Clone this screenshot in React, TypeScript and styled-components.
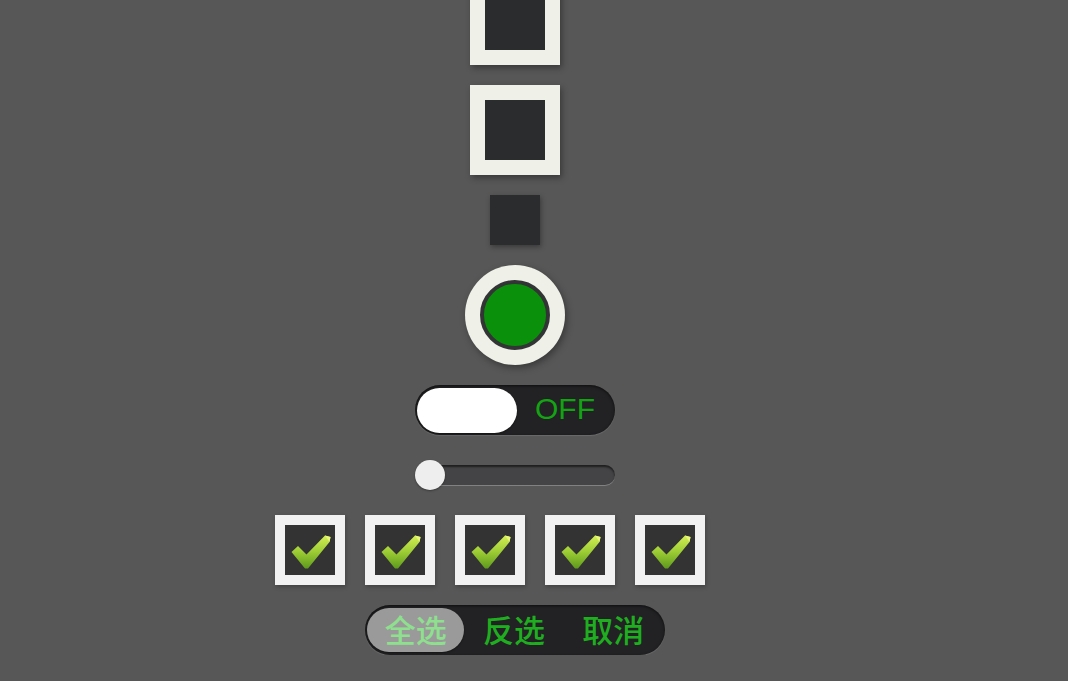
import React from "react";
import styled, { createGlobalStyle } from "styled-components";

const Global = createGlobalStyle`
  html, body { margin: 0; padding: 0; background: #575757; overflow: hidden; }
  body { font-family: "Liberation Sans", Arial, "Noto Sans CJK SC", sans-serif; }
`;

const Column = styled.div`
  width: 1030px;
  display: flex;
  flex-direction: column;
  align-items: center;
  margin-top: -25px;
`;

const FrameBox = styled.div<{ $gap?: number }>`
  width: 90px;
  height: 90px;
  box-sizing: border-box;
  border: 15px solid #eff1e8;
  background: #2b2c2e;
  box-shadow: 2px 3px 6px rgba(0, 0, 0, 0.35);
  margin-top: ${(p) => p.$gap ?? 0}px;
`;

const Square = styled.div`
  width: 50px;
  height: 50px;
  margin-top: 20px;
  background: #2b2c2e;
  box-shadow: 1px 2px 5px rgba(0, 0, 0, 0.35);
`;

const Radio = styled.div`
  width: 100px;
  height: 100px;
  margin-top: 20px;
  box-sizing: border-box;
  border-radius: 50%;
  background: #eff0e8;
  padding: 15px;
  box-shadow: 2px 3px 7px rgba(0, 0, 0, 0.35);
`;

const RadioDot = styled.div`
  width: 100%;
  height: 100%;
  box-sizing: border-box;
  border-radius: 50%;
  border: 4px solid #333435;
  background: #0b900b;
`;

const Toggle = styled.div`
  width: 200px;
  height: 50px;
  margin-top: 20px;
  box-sizing: border-box;
  border-radius: 25px;
  background: #222224;
  padding: 2px;
  display: flex;
  align-items: center;
  box-shadow: inset 0 1px 3px rgba(0, 0, 0, 0.6), 0 1px 1px rgba(255, 255, 255, 0.12);
`;

const Knob = styled.div`
  width: 100px;
  height: 45px;
  border-radius: 23px;
  background: #ffffff;
  box-shadow: 0 1px 2px rgba(0, 0, 0, 0.4);
`;

const ToggleLabel = styled.span`
  flex: 1;
  text-align: center;
  color: #13a313;
  font-size: 30px;
  font-family: "Liberation Sans", Arial, sans-serif;
  line-height: 1;
  margin-top: -2px;
`;

const Slider = styled.div`
  position: relative;
  width: 200px;
  height: 30px;
  margin-top: 25px;
  display: flex;
  align-items: center;
`;

const Track = styled.div`
  flex: 1;
  height: 20px;
  margin-left: 14px;
  border-radius: 10px;
  background: #444446;
  box-shadow: inset 0 2px 2px rgba(0, 0, 0, 0.55), 0 1px 0 rgba(255, 255, 255, 0.25);
`;

const Thumb = styled.div`
  position: absolute;
  left: 0;
  top: 0;
  width: 30px;
  height: 30px;
  border-radius: 50%;
  background: #eeeeee;
  box-shadow: 0 1px 2px rgba(0, 0, 0, 0.35);
`;

const CheckRow = styled.div`
  display: flex;
  gap: 20px;
  margin-top: 25px;
  margin-right: 50px;
`;

const CheckBox = styled.div`
  width: 70px;
  height: 70px;
  box-sizing: border-box;
  border: 10px solid #f1f1f1;
  background: #333333;
  display: flex;
  align-items: center;
  justify-content: center;
  box-shadow: 1px 2px 4px rgba(0, 0, 0, 0.25);
`;

const Segmented = styled.div`
  width: 300px;
  height: 50px;
  margin-top: 20px;
  box-sizing: border-box;
  border-radius: 25px;
  background: #222224;
  padding: 2px;
  display: flex;
  align-items: center;
  box-shadow: inset 0 1px 3px rgba(0, 0, 0, 0.6), 0 1px 1px rgba(255, 255, 255, 0.12);
`;

const Segment = styled.div<{ $active?: boolean }>`
  width: ${(p) => (p.$active ? 98 : 100)}px;
  height: 44px;
  border-radius: 22px;
  display: flex;
  align-items: center;
  justify-content: center;
  padding-bottom: 3px;
  box-sizing: border-box;
  font-family: "Noto Sans CJK SC", "Liberation Sans", sans-serif;
  font-size: 31px;
  font-weight: 500;
  line-height: 1;
  background: ${(p) => (p.$active ? "#9a9a9a" : "transparent")};
  color: ${(p) => (p.$active ? "#8ee08e" : "#1fae1f")};
  box-shadow: ${(p) => (p.$active ? "0 1px 2px rgba(0,0,0,0.4)" : "none")};
`;

const Check = ({ id }: { id: string }) => (
  <svg width="50" height="50" viewBox="0 0 50 50">
    <defs>
      <linearGradient id={id} x1="0" y1="0" x2="0" y2="1">
        <stop offset="0" stopColor="#d4ee55" />
        <stop offset="0.5" stopColor="#9ccc34" />
        <stop offset="1" stopColor="#5e9a1c" />
      </linearGradient>
    </defs>
    <path
      d="M6.5 27 L13 21 L21.5 29.5 L40 10.5 L45.5 12 L44.5 17 L23 43.5 L20 43.5 Z"
      fill={`url(#${id})`}
    />
    <path d="M40 10.5 L45.5 12 L44.5 17 Z" fill="#e8f77a" />
  </svg>
);

export default function App() {
  return (
    <>
      <Global />
      <Column>
        <FrameBox />
        <FrameBox $gap={20} />
        <Square />
        <Radio>
          <RadioDot />
        </Radio>
        <Toggle>
          <Knob />
          <ToggleLabel>OFF</ToggleLabel>
        </Toggle>
        <Slider>
          <Track />
          <Thumb />
        </Slider>
        <CheckRow>
          {[0, 1, 2, 3, 4].map((i) => (
            <CheckBox key={i}>
              <Check id={`chk${i}`} />
            </CheckBox>
          ))}
        </CheckRow>
        <Segmented>
          <Segment $active>全选</Segment>
          <Segment>反选</Segment>
          <Segment>取消</Segment>
        </Segmented>
      </Column>
    </>
  );
}
